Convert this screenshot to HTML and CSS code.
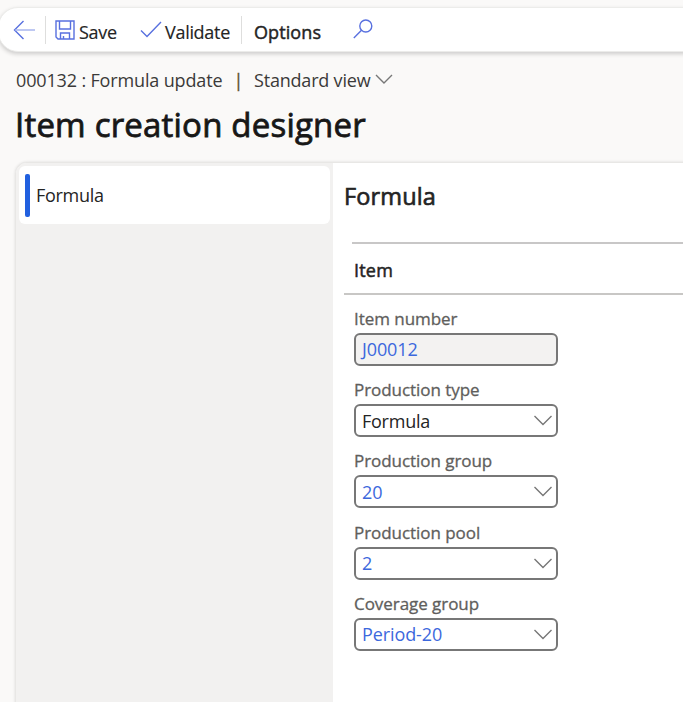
FILE: index.html
```html
<!DOCTYPE html>
<html lang="en">
<head>
<meta charset="utf-8">
<title>Item creation designer</title>
<link rel="stylesheet" href="styles.css">
</head>
<body>
<header class="toolbar">
  <svg class="icon back" width="24" height="24" viewBox="0 0 24 24"><path d="M10.500 3 1.500 12l9 9"/><path class="soft" d="M2 12h20"/></svg>
  <span class="divider"></span>
  <svg class="icon save" width="20" height="20" viewBox="0 0 20 20"><path d="M1 1h18v18H3l-2-2z"/><path d="M4.500 1v8h11V1M5.500 19v-6h9v6M8.500 19v-3"/></svg>
  <span class="action save-text">Save</span>
  <svg class="icon check" width="22" height="17" viewBox="0 0 22 17"><path d="m1 9.500 6 6L21 1"/></svg>
  <span class="action validate-text">Validate</span>
  <span class="divider second"></span>
  <span class="action options-text">Options</span>
  <svg class="icon search" width="20" height="20" viewBox="0 0 20 20"><circle cx="12.800" cy="7" r="6"/><path d="M8.500 11.300.8 19"/></svg>
</header>
<div class="crumbs">
  <span class="record">000132 : Formula update</span>
  <span class="pipe">|</span>
  <span class="view">Standard view</span>
  <svg class="chevron" width="18" height="11" viewBox="0 0 18 11"><path d="m1 1 8 8 8-8"/></svg>
</div>
<h1 class="title">Item creation designer</h1>
<main class="panel">
  <nav class="sidebar">
    <div class="tab"><span class="marker"></span><span class="tab-text">Formula</span></div>
  </nav>
  <section class="content">
    <h2 class="heading">Formula</h2>
    <div class="group">Item</div>
    <div class="fields">
      <div class="field"><label>Item number</label><div class="input readonly link"><span class="code">J00012</span></div></div>
      <div class="field"><label>Production type</label><div class="input"><span>Formula</span><svg class="chevron" width="18" height="11" viewBox="0 0 18 11"><path d="m.5 1 8.500 8.500L17.500 1"/></svg></div></div>
      <div class="field"><label>Production group</label><div class="input link"><span>20</span><svg class="chevron" width="18" height="11" viewBox="0 0 18 11"><path d="m.5 1 8.500 8.500L17.500 1"/></svg></div></div>
      <div class="field"><label>Production pool</label><div class="input link"><span>2</span><svg class="chevron" width="18" height="11" viewBox="0 0 18 11"><path d="m.5 1 8.500 8.500L17.500 1"/></svg></div></div>
      <div class="field"><label>Coverage group</label><div class="input link"><span>Period-20</span><svg class="chevron" width="18" height="11" viewBox="0 0 18 11"><path d="m.5 1 8.500 8.500L17.500 1"/></svg></div></div>
    </div>
  </section>
</main>
</body>
</html>
```
FILE: styles.css
```css
* { box-sizing: border-box; }
html, body { height: 100%; }
body {
  margin: 0;
  padding-top: 7px;
  display: flex;
  flex-direction: column;
  overflow: hidden;
  background: #faf9f8;
  color: #242424;
  font: 18px/24px "Open Sans", "Noto Sans", sans-serif;
}
svg { flex: none; fill: none; }
span, label { white-space: nowrap; }
.toolbar {
  flex: none;
  height: 45px;
  margin: 0 -20px 0 -2px;
  padding-left: 14px;
  display: flex;
  align-items: center;
  background: #fff;
  border: 1px solid #ececea;
  border-radius: 20px;
  box-shadow: 0 2px 4px rgba(0, 0, 0, .18);
}
.icon { stroke: #5870df; stroke-width: 1.4; }
.icon .soft { stroke: #a3b0ec; }
.divider { width: 1px; height: 28px; margin-left: 8px; background: #dededd; }
.save { margin-left: 9px; }
.save-text { width: 39px; margin-left: 4px; }
.check { margin-left: 22px; }
.validate-text { width: 66px; margin-left: 3px; }
.divider.second { margin-left: 10px; }
.action { padding-top: 5px; letter-spacing: -.3px; -webkit-text-stroke: .15px; }
.options-text { width: 68px; margin-left: 12px; letter-spacing: .1px; -webkit-text-stroke: .45px; }
.search { margin-left: 31px; margin-top: -1px; }
.crumbs { flex: none; height: 24px; margin: 16px 0 0 16px; display: flex; align-items: center; color: #3b3a39; }
.record { width: 207px; letter-spacing: -.15px; }
.pipe { width: 31px; text-align: center; color: #5c5130; -webkit-text-stroke: .3px; }
.view { width: 117px; letter-spacing: -.2px; }
.chevron { stroke: #777; stroke-width: 1.4; }
.crumbs .chevron { margin: -2px 0 0 4px; }
.title { flex: none; margin: 11px 0 0 15px; font-size: 33px; line-height: 44px; font-weight: 400; letter-spacing: .2px; color: #171717; -webkit-text-stroke: .8px; }
.panel {
  flex: 1;
  margin: 15px -20px -20px 15px;
  display: flex;
  background: #fff;
  border: 1px solid #e8e7e5;
  border-radius: 12px;
  box-shadow: 0 0 3px rgba(0, 0, 0, .12);
  overflow: hidden;
}
.sidebar { width: 317px; padding: 3px 3px 0 3px; background: #f2f1f0; }
.tab { height: 58px; display: flex; align-items: center; background: #fff; border-radius: 6px; padding-left: 6px; }
.marker { width: 5px; height: 43px; border-radius: 2px; background: #2160df; }
.tab-text { margin-left: 6px; letter-spacing: -.3px; }
.content { flex: 1; padding: 17px 0 0 11px; }
.heading { margin: 0; font-size: 23.5px; line-height: 32px; font-weight: 400; letter-spacing: .15px; -webkit-text-stroke: .65px; }
.group { height: 53px; margin-top: 30px; padding: 16px 0 0 10px; border-bottom: 2px solid #c8c7c5; letter-spacing: .2px; -webkit-text-stroke: .5px; background: linear-gradient(#c8c7c7, #c8c7c7) 8px 0 / 100% 2px no-repeat; }
.fields { display: grid; grid-auto-rows: 71.200px; padding: 12px 0 0 10px; }
.field label { display: block; height: 26px; color: #605e5c; font-size: 17px; letter-spacing: -.05px; -webkit-text-stroke: .3px; }
.input { width: 204px; height: 33px; border: 2px solid #777; border-radius: 6px; padding: 0 4px 0 6px; display: flex; align-items: center; justify-content: space-between; background: #fff; letter-spacing: -.25px; }
.readonly { background: #f3f2f1; }
.link { color: #3c68dd; letter-spacing: -.1px; }
.code { margin-top: -2px; }
```
